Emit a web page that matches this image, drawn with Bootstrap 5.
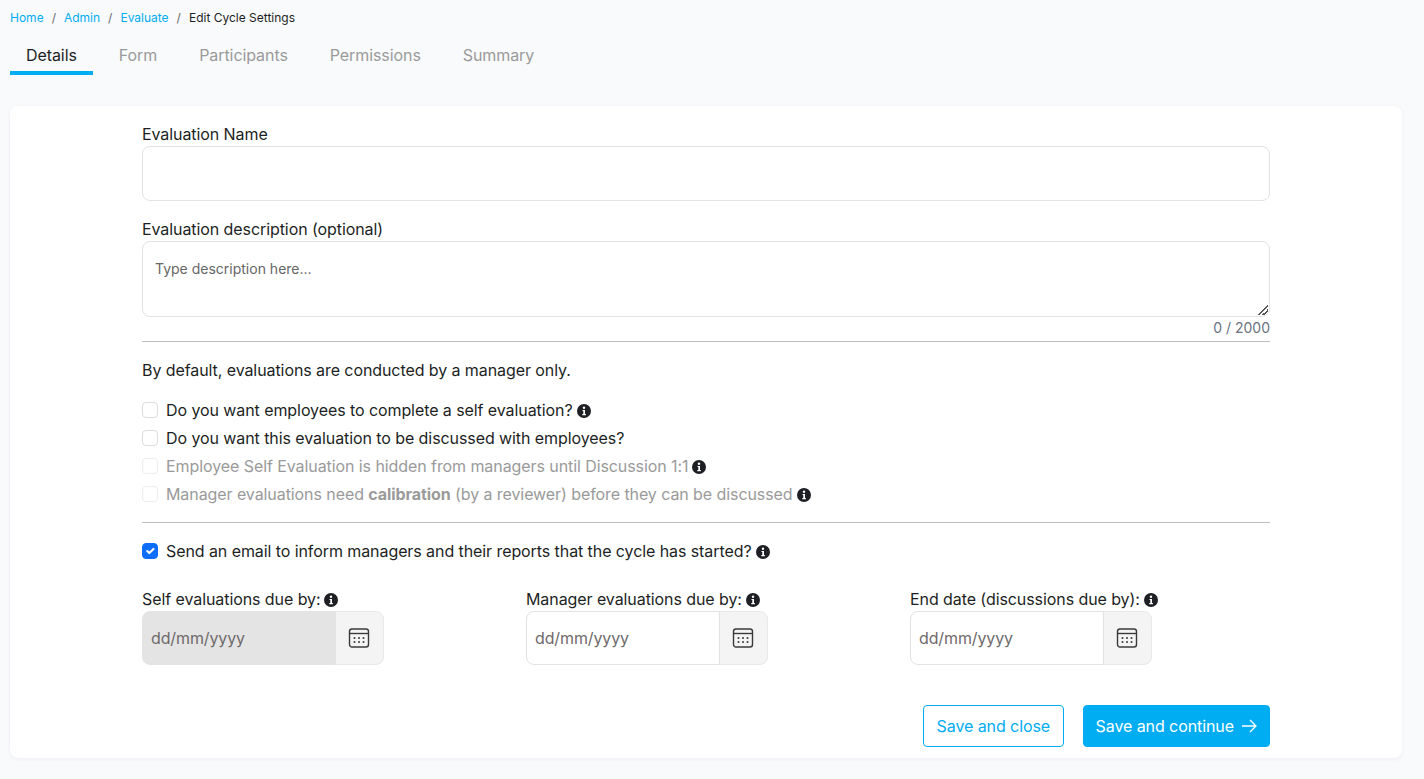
<!DOCTYPE html>
<html lang="en">
<head>
<meta charset="utf-8">
<title>Edit Cycle Settings</title>
<link href="https://cdn.jsdelivr.net/npm/bootstrap@5.3.0/dist/css/bootstrap.min.css" rel="stylesheet">
<style>
html,body{height:100%}
body{background:#f9fafc;font-family:Inter,"Liberation Sans",sans-serif;font-size:16px;letter-spacing:-.08px;color:#1d1f24;padding:0 22px 0 10px;overflow:hidden}
.crumbs{margin:0;padding-top:10px;font-size:12px;line-height:16px;letter-spacing:0;--bs-breadcrumb-divider-color:#666;--bs-breadcrumb-item-padding-x:8px;--bs-breadcrumb-margin-bottom:0}
.crumbs a{color:#00adf2;text-decoration:none}
.crumbs .breadcrumb-item.active{color:#1d1f24}
.tabbar{margin-top:9px;gap:26px;height:40px;align-items:flex-start}
.tabbar .nav-link{color:#9a9a9a;padding:8px 0 4px;line-height:24px;font-size:16px;border-bottom:4px solid transparent}
.tabbar .nav-link.active{color:#1d1f24;border-bottom-color:#00adf2;padding-left:16px;padding-right:16px;margin-right:0}
.tabbar .nav-item+.nav-item+.nav-item{margin-left:16px}
.sheet{margin-top:31px;height:652px;background:#fff;border-radius:8px;box-shadow:0 1px 4px rgba(30,40,60,.06);padding:16px 132px 0}
.fld-label{display:block;line-height:24px;margin:0 0 0}
.fld{display:block;width:100%;border:1px solid #e2e2e2;border-radius:8px;background:#fff;box-shadow:none}
.name-fld{height:55px}
.desc-fld{height:76px;font-size:14px;padding:16px 12px;line-height:22px;min-height:40px;letter-spacing:0}
.desc-fld::placeholder{color:#666;opacity:1}
.desc-fld::-webkit-resizer{background:linear-gradient(135deg,transparent 46%,#555 46%,#555 56%,transparent 56%,transparent 70%,#555 70%,#555 82%,transparent 82%) no-repeat right 1px bottom 1px/10px 10px}
.second{margin-top:16px}
.counter{text-align:right;font-size:14px;line-height:20px;color:#6b7280;margin-top:1px;letter-spacing:0}
.rule{margin:3px 0 0;border:0;border-top:1px solid #bdbdbd;opacity:1}
.intro{margin:16px 0 0;line-height:24px}
.opts{margin-top:14px}
.opt{display:flex;align-items:center;height:28px;margin:0;padding:0}
.opt .form-check-input{width:16px;height:16px;margin:0 8px 0 0;border:1px solid #dcdcdc;border-radius:4px;flex:none}
.opt .form-check-input:checked{background-color:#0d6efd;border-color:#0d6efd}
.opt .form-check-input:disabled{opacity:.5}
.opt .form-check-label{line-height:24px}
.opt.off .form-check-label{color:#9a9a9a;opacity:1}
.info{display:inline-block;width:14px;height:14px;margin-left:4px;vertical-align:-2px;flex:none}
.rule2{margin:14px 0 0}
.send{margin-top:14px}
.dates{display:grid;grid-template-columns:repeat(3,360px);gap:24px;margin-top:22px}
.date-wrap{width:242px;height:54px;flex-wrap:nowrap}
.date-wrap .form-control{height:54px;border:1px solid #e2e2e2;border-radius:8px 0 0 8px;padding:0 8px;font-size:16px;letter-spacing:-.12px;box-shadow:none}
.date-wrap .form-control::placeholder{color:#6f6a6a;opacity:1}
.date-wrap .form-control:disabled{background:#e4e4e4;border-color:#e4e4e4}
.date-wrap .input-group-text{width:49px;justify-content:center;padding:0 2px 0 0;background:#f4f4f4;border:1px solid #e8e8e8;border-radius:0 8px 8px 0}
.actions{margin-top:40px;gap:19px}
.btn-line,.btn-full{height:42px;font-size:16px;letter-spacing:-.08px;border-radius:4px;padding:0 12px;display:inline-flex;align-items:center;border:1px solid #00adf2}
.btn-line{color:#00adf2;background:#fff;padding:0 12.5px}
.btn-full{color:#fff;background:#00adf2}
.btn-line:hover{color:#00adf2;background:#fff;border-color:#00adf2}
.btn-full:hover{color:#fff;background:#00adf2;border-color:#00adf2}
.btn-full svg{margin-left:8px}
</style>
</head>
<body>
<svg width="0" height="0" class="position-absolute">
  <symbol id="ic-info" viewBox="0 0 14 14"><circle cx="7" cy="7" r="7" fill="#1d1f24"/><circle cx="7" cy="3.8" r="1.2" fill="#fff"/><path d="M5.5 5.9h2.5v4.1h.9v1.2H5.3V10h1V7.1h-.8z" fill="#fff"/></symbol>
  <symbol id="ic-cal" viewBox="0 0 22 22"><rect x="1.5" y="2" width="19" height="18" rx="2.5" fill="none" stroke="#3a3a3a" stroke-width="1.4"/><path d="M1.5 6.5h19" stroke="#3a3a3a" stroke-width="1.4"/><g fill="#3a3a3a"><circle cx="6.5" cy="11" r="1"/><circle cx="11" cy="11" r="1"/><circle cx="15.5" cy="11" r="1"/><circle cx="6.5" cy="15" r="1"/><circle cx="11" cy="15" r="1"/><circle cx="15.5" cy="15" r="1"/></g></symbol>
</svg>

<nav aria-label="breadcrumb">
  <ol class="breadcrumb crumbs">
    <li class="breadcrumb-item"><a href="#">Home</a></li>
    <li class="breadcrumb-item"><a href="#">Admin</a></li>
    <li class="breadcrumb-item"><a href="#">Evaluate</a></li>
    <li class="breadcrumb-item active" aria-current="page">Edit Cycle Settings</li>
  </ol>
</nav>

<ul class="nav tabbar">
  <li class="nav-item"><a class="nav-link active" href="#">Details</a></li>
  <li class="nav-item"><a class="nav-link" href="#">Form</a></li>
  <li class="nav-item"><a class="nav-link" href="#">Participants</a></li>
  <li class="nav-item"><a class="nav-link" href="#">Permissions</a></li>
  <li class="nav-item"><a class="nav-link" href="#">Summary</a></li>
</ul>

<main class="sheet">
  <label class="fld-label" for="evName">Evaluation Name</label>
  <input id="evName" class="fld name-fld form-control" type="text">

  <label class="fld-label second" for="evDesc">Evaluation description (optional)</label>
  <textarea id="evDesc" class="fld desc-fld form-control" placeholder="Type description here..."></textarea>
  <div class="counter">0 / 2000</div>
  <hr class="rule">

  <p class="intro">By default, evaluations are conducted by a manager only.</p>

  <div class="opts">
    <div class="opt form-check"><input class="form-check-input" type="checkbox" id="o1"><label class="form-check-label" for="o1">Do you want employees to complete a self evaluation?<svg class="info"><use href="#ic-info"/></svg></label></div>
    <div class="opt form-check"><input class="form-check-input" type="checkbox" id="o2"><label class="form-check-label" for="o2">Do you want this evaluation to be discussed with employees?</label></div>
    <div class="opt off form-check"><input class="form-check-input" type="checkbox" id="o3" disabled><label class="form-check-label" for="o3">Employee Self Evaluation is hidden from managers until Discussion 1:1<svg class="info"><use href="#ic-info"/></svg></label></div>
    <div class="opt off form-check"><input class="form-check-input" type="checkbox" id="o4" disabled><label class="form-check-label" for="o4">Manager evaluations need <b>calibration</b> (by a reviewer) before they can be discussed<svg class="info"><use href="#ic-info"/></svg></label></div>
  </div>

  <hr class="rule rule2">

  <div class="opt form-check send"><input class="form-check-input" type="checkbox" id="o5" checked><label class="form-check-label" for="o5">Send an email to inform managers and their reports that the cycle has started?<svg class="info"><use href="#ic-info"/></svg></label></div>

  <div class="dates">
    <div>
      <label class="fld-label">Self evaluations due by:<svg class="info"><use href="#ic-info"/></svg></label>
      <div class="input-group date-wrap"><input class="form-control" type="text" placeholder="dd/mm/yyyy" disabled><span class="input-group-text"><svg width="22" height="22"><use href="#ic-cal"/></svg></span></div>
    </div>
    <div>
      <label class="fld-label">Manager evaluations due by:<svg class="info"><use href="#ic-info"/></svg></label>
      <div class="input-group date-wrap"><input class="form-control" type="text" placeholder="dd/mm/yyyy"><span class="input-group-text"><svg width="22" height="22"><use href="#ic-cal"/></svg></span></div>
    </div>
    <div>
      <label class="fld-label">End date (discussions due by):<svg class="info"><use href="#ic-info"/></svg></label>
      <div class="input-group date-wrap"><input class="form-control" type="text" placeholder="dd/mm/yyyy"><span class="input-group-text"><svg width="22" height="22"><use href="#ic-cal"/></svg></span></div>
    </div>
  </div>

  <div class="d-flex justify-content-end actions">
    <button type="button" class="btn btn-line">Save and close</button>
    <button type="button" class="btn btn-full">Save and continue<svg width="15" height="14" viewBox="0 0 15 14" fill="none" stroke="#fff" stroke-width="1.3"><path d="M0 7h14M8 1l6 6-6 6"/></svg></button>
  </div>
</main>
<script src="https://cdn.jsdelivr.net/npm/bootstrap@5.3.0/dist/js/bootstrap.bundle.min.js"></script>
</body>
</html>
